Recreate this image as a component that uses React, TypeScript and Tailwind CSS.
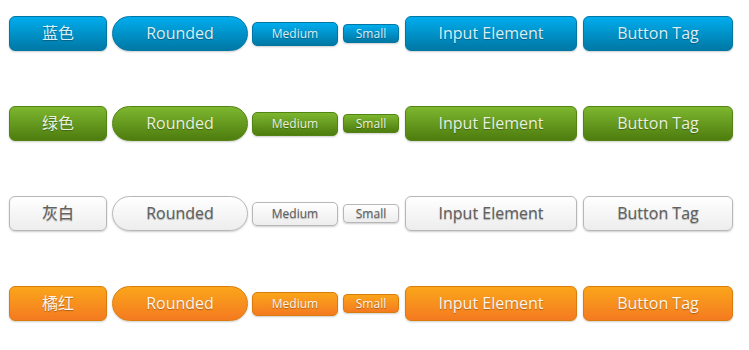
import React from "react";

const themes = {
	blue: "text-[#d9eef7] border-[#0076a3] bg-gradient-to-b from-[#00adee] to-[#0078a5]",
	green: "text-[#e8f0de] border-[#538312] bg-gradient-to-b from-[#7db72f] to-[#4e7d0e]",
	white: "text-[#606060] border-[#b7b7b7] bg-gradient-to-b from-[#ffffff] to-[#ededed]",
	orange: "text-[#fef4e9] border-[#da7c0c] bg-gradient-to-b from-[#faa51a] to-[#f47a20]",
};

type Theme = keyof typeof themes;

const rows: { theme: Theme; label: string }[] = [
	{ theme: "blue", label: "蓝色" },
	{ theme: "green", label: "绿色" },
	{ theme: "white", label: "灰白" },
	{ theme: "orange", label: "橘红" },
];

const base =
	"flex items-center justify-center border leading-none shadow-[0_1px_2px_rgba(0,0,0,0.2)] [text-shadow:0_1px_1px_rgba(0,0,0,0.3)] cursor-pointer";

const App = () => {
	return (
		<div
			className="w-[749px] h-[350px] bg-white pl-[9px] pt-4 flex flex-col gap-[55px]"
			style={{ fontFamily: '"Open Sans", "Noto Sans CJK SC", sans-serif' }}
		>
			{rows.map((row) => {
				const t = themes[row.theme];
				return (
					<div key={row.theme} className="flex items-center h-[35px]">
						<a className={`${base} ${t} w-[98px] h-[35px] pb-[2px] rounded-[6px] text-[16px]`}>{row.label}</a>
						<a className={`${base} ${t} ml-[5px] w-[136px] h-[35px] pb-[2px] rounded-full text-[16px]`}>Rounded</a>
						<a className={`${base} ${t} ml-[4px] w-[86px] h-[24px] pt-px rounded-[5px] text-[12px]`}>Medium</a>
						<a className={`${base} ${t} ml-[5px] w-[56px] h-[19px] pt-px rounded-[4px] text-[12px]`}>Small</a>
						<input
							type="button"
							value="Input Element"
							className={`${base} ${t} ml-[6px] w-[172px] h-[35px] pb-[2px] rounded-[6px] text-[16px]`}
						/>
						<button className={`${base} ${t} ml-[6px] w-[150px] h-[35px] pb-[2px] rounded-[6px] text-[16px]`}>
							Button Tag
						</button>
					</div>
				);
			})}
		</div>
	);
};

export default App;
